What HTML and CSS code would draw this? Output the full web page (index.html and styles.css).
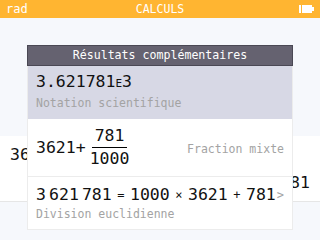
FILE: index.html
```html
<!DOCTYPE html>
<html>
<head>
<meta charset="utf-8">
<link rel="stylesheet" href="styles.css">
</head>
<body>
<div class="topbar">
  <span class="unit">rad</span>
  <span class="title">CALCULS</span>
  <span class="battery"><svg width="15" height="8" viewBox="0 0 15 8"><rect x="0" y="0" width="2" height="8" fill="#fff"/><rect x="3" y="0" width="10" height="8" fill="#fff"/><rect x="13" y="2" width="2" height="4" fill="#fff"/></svg></span>
</div>
<div class="history">
  <div class="spacer"></div>
  <div class="calc">
    <div class="input">3621781/1000</div>
    <div class="output">3621.781</div>
  </div>
</div>
<div class="popup">
  <div class="popup-title">Résultats complémentaires</div>
  <div class="row row-sel">
    <div class="big">3.621781<span class="exp">E</span>3</div>
    <div class="legend">Notation scientifique</div>
  </div>
  <div class="row row-frac">
    <div class="big mixed">3621+<span class="frac"><span class="num">781</span><span class="den">1000</span></span></div>
    <div class="legend">Fraction mixte</div>
  </div>
  <div class="row row-div">
    <div class="big eq">3<span class="th"></span>621<span class="th"></span>781<span class="op">=</span>1000<span class="op">×</span>3621<span class="op">+</span>781<span class="chev">&gt;</span></div>
    <div class="legend">Division euclidienne</div>
  </div>
</div>
</body>
</html>
```
FILE: styles.css
```css
html, body { margin: 0; padding: 0; }
body {
  width: 320px; height: 240px; overflow: hidden; position: relative;
  background: #f6f8fc;
  font-family: "DejaVu Sans Mono", monospace;
}
.topbar {
  height: 18px; background: #ffb531; color: #fff;
  display: flex; align-items: center; justify-content: space-between;
  padding: 0 6px 0 6px; font-size: 12px; box-sizing: border-box;
}
.topbar .title { position: absolute; left: 0; right: 0; text-align: center; top: 2px; font-size: 11.5px; }
.battery { display: flex; }
.history { display: flex; flex-direction: column; }
.spacer { height: 118px; }
.calc {
  height: 65px; background: #fff; border-bottom: 1px solid #e6e6e6;
  position: relative; font-size: 16.5px; color: #111;
}
.input { position: absolute; left: 10px; top: 9px; }
.output { position: absolute; right: 10px; top: 37px; }
.popup {
  position: absolute; left: 27px; top: 45px; width: 266px;
  background: #fff; border: 1px solid #ececec; border-top: none; box-sizing: border-box;
  display: flex; flex-direction: column;
}
.popup-title {
  height: 21px; background: #656270; border: 1px solid #4a4854; box-sizing: border-box;
  margin: 0 -1px;
  color: #fff; font-size: 11.6px; text-align: center; line-height: 19px;
}
.row { position: relative; padding: 0 8px; box-sizing: border-box; }
.row-sel { height: 53px; background: #d7d8e5; display: flex; flex-direction: column; padding-top: 6px; }
.row-frac { height: 58px; border-bottom: 1px solid #ececec; display: flex; align-items: center; justify-content: space-between; }
.row-div { height: 52px; display: flex; flex-direction: column; padding-top: 8px; }
.big { font-size: 16.5px; color: #111; line-height: 20px; }
.exp { font-size: 11px; }
.legend { font-size: 11.5px; color: #a3a3a3; line-height: 14px; margin-top: 2px; }
.row-div .legend { margin-top: 2px; }
.mixed { display: flex; align-items: center; }
.frac { display: inline-flex; flex-direction: column; align-items: center; margin-left: 1px; }
.num { padding: 0 3px 2px; border-bottom: 1px solid #000; line-height: 18px; }
.den { padding: 2px 3px 0; line-height: 18px; }
.th { display: inline-block; width: 4px; }
.op { display: inline-block; padding: 0 5.5px; font-size: 12px; }
.eq { white-space: nowrap; display: flex; align-items: center; }
.chev { color: #a3a3a3; font-size: 12px; margin-left: 1px; }
```
